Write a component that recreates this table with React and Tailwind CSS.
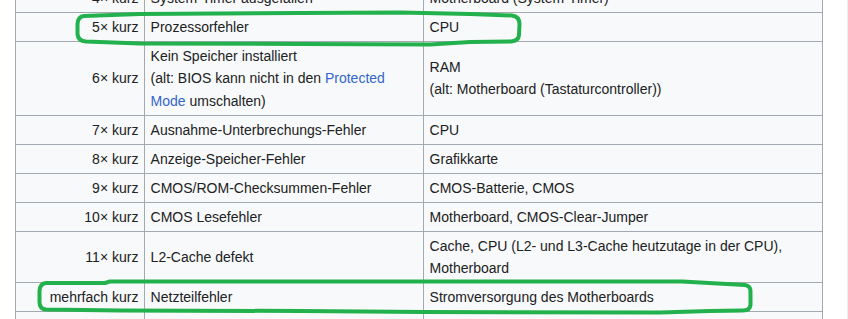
import React from "react";

const rows = [
  { a: "4× kurz", b: "System-Timer ausgefallen", c: "Motherboard (System-Timer)" },
  { a: "5× kurz", b: "Prozessorfehler", c: "CPU" },
  {
    a: "6× kurz",
    b: (
      <>
        Kein Speicher installiert
        <br />
        (alt: BIOS kann nicht in den <span className="text-[#3366cc]">Protected</span>{" "}
        <span className="text-[#3366cc]">Mode</span> umschalten)
      </>
    ),
    c: (
      <>
        RAM
        <br />
        (alt: Motherboard (Tastaturcontroller))
      </>
    ),
  },
  { a: "7× kurz", b: "Ausnahme-Unterbrechungs-Fehler", c: "CPU" },
  { a: "8× kurz", b: "Anzeige-Speicher-Fehler", c: "Grafikkarte" },
  { a: "9× kurz", b: "CMOS/ROM-Checksummen-Fehler", c: "CMOS-Batterie, CMOS" },
  { a: "10× kurz", b: "CMOS Lesefehler", c: "Motherboard, CMOS-Clear-Jumper" },
  {
    a: "11× kurz",
    b: "L2-Cache defekt",
    c: (
      <>
        Cache, CPU (L2- und L3-Cache heutzutage in der CPU),
        <br />
        Motherboard
      </>
    ),
  },
  { a: "mehrfach kurz", b: "Netzteilfehler", c: "Stromversorgung des Motherboards" },
  { a: "", b: "", c: "" },
];

export default function App() {
  return (
    <div
      className="relative w-[848px] h-[319px] overflow-hidden bg-white border-r border-[#ececec] text-[14px] leading-[22.4px] text-[#202122]"
      style={{ fontFamily: '"Liberation Sans", Arial, sans-serif' }}
    >
      <div className="ml-[15px] mt-[-16px] w-[808px] border-l border-r border-[#a2a9b1] bg-[#f8f9fa]">
        {rows.map((r, i) => (
          <div
            key={i}
            className={"flex " + (i === 0 ? "" : "border-t border-[#a2a9b1]")}
          >
            <div className="w-[128px] shrink-0 flex items-center justify-end text-right py-[2.8px] px-[5.6px] min-h-[28px]">
              {r.a}
            </div>
            <div className="w-[279px] shrink-0 flex items-center border-l border-[#a2a9b1] py-[2.8px] px-[5.6px]">
              <div>{r.b}</div>
            </div>
            <div className="w-[399px] shrink-0 flex items-center border-l border-[#a2a9b1] py-[2.8px] px-[5.6px]">
              <div>{r.c}</div>
            </div>
          </div>
        ))}
      </div>
      <svg
        className="absolute left-0 top-0 pointer-events-none"
        width="848"
        height="319"
        viewBox="0 0 848 319"
        fill="none"
        stroke="#22b14c"
        strokeWidth="4"
        strokeLinejoin="round"
        strokeLinecap="round"
      >
        <path d="M84 16 L140 14 L300 13 L400 12.5 L470 14 L512 15.5 Q519.5 16.5 519.5 24 L519 35 Q518.5 41 511 41.5 L470 42 L430 44.5 L300 44 L140 43.5 L86 41.5 Q78 41 77.5 34 L77.5 24 Q78 16.5 84 16 Z" />
        <path d="M46 283 L105 283 L110 281.5 L300 281.5 L682 281.5 L745 285 Q750.5 286 750.5 291 L750.5 305 Q750 310.5 743 310.5 L710 311 L660 312.5 L424 312 L300 311 L120 310.5 L46 309.5 Q39.5 309 39.5 302 L39.5 291 Q40 283.5 46 283 Z" />
      </svg>
    </div>
  );
}
